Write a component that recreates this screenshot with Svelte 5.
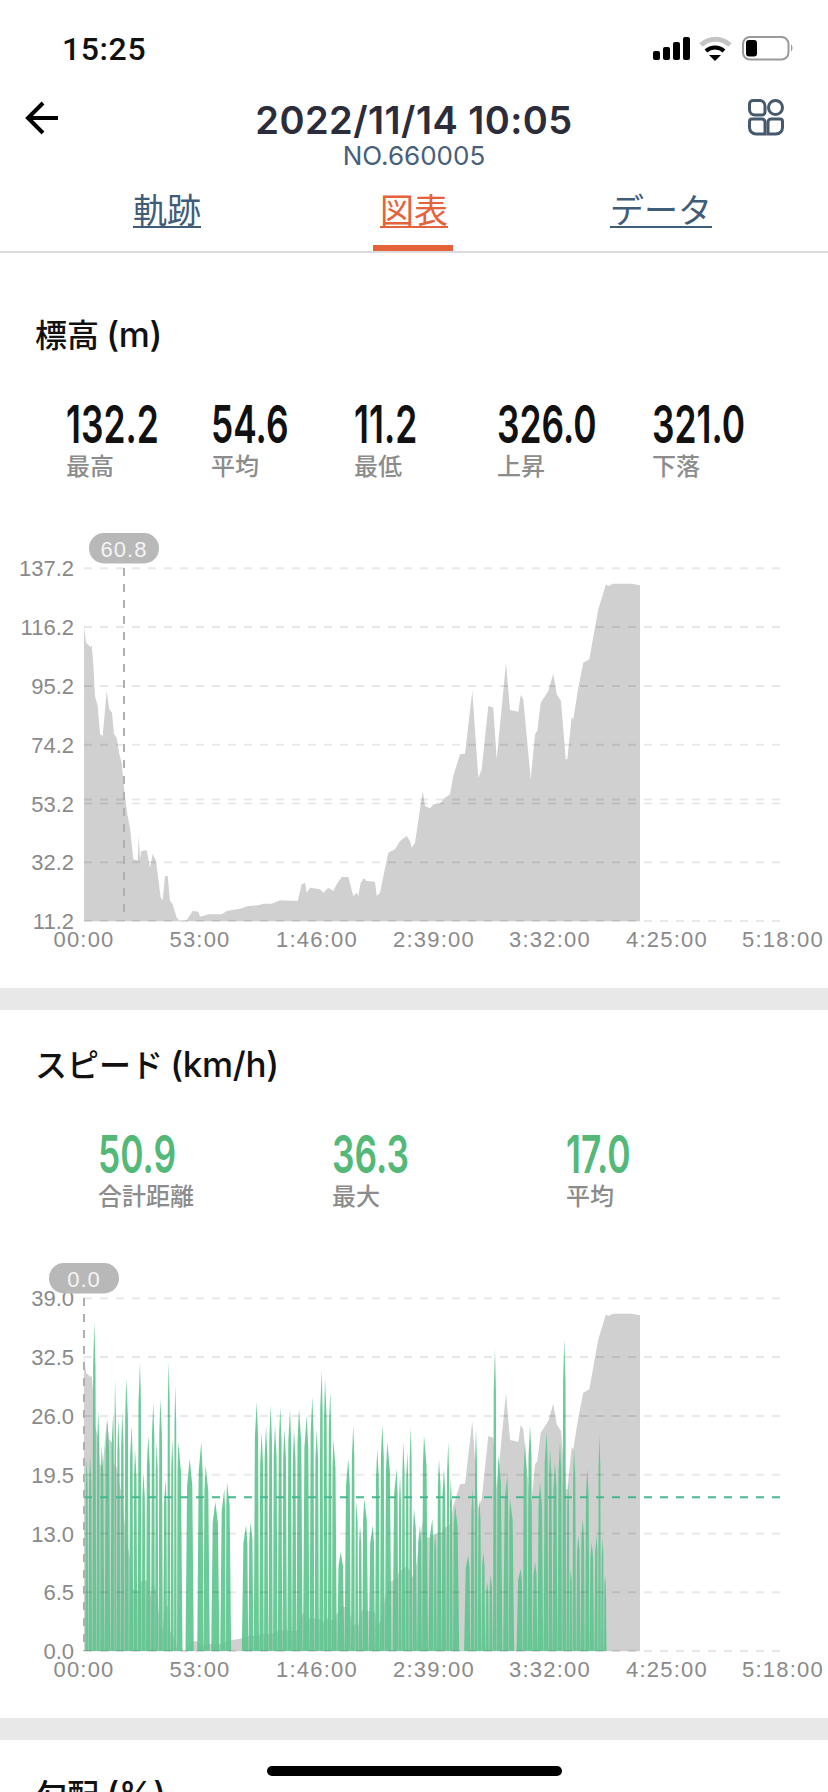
<script>
	// elevation outline, traced in 3x crop coordinates (divided by 3 when drawn)
	const elevation = [
		[252, 1201], [252, 315], [258, 365], [272, 378], [275, 372], [280, 430], [285, 525], [293, 555], [300, 640], [308, 645],
		[320, 510], [328, 565], [336, 575], [342, 640], [350, 650], [358, 700], [365, 725], [372, 800], [382, 880], [390, 920],
		[400, 1015], [413, 1018], [416, 945], [420, 1015], [424, 990], [440, 988], [450, 1040], [458, 998], [468, 1020], [482, 1130],
		[488, 1138], [495, 1065], [503, 1065], [510, 1140], [518, 1150], [530, 1190], [540, 1200], [560, 1198], [578, 1170], [595, 1172],
		[600, 1187], [625, 1180], [665, 1180], [680, 1170], [720, 1163], [745, 1155], [775, 1153], [790, 1148], [815, 1148], [840, 1138],
		[893, 1140], [905, 1090], [915, 1085], [920, 1115], [930, 1100], [960, 1105], [970, 1115], [985, 1100], [1000, 1110], [1010, 1090],
		[1025, 1068], [1045, 1068], [1060, 1125], [1070, 1115], [1075, 1125], [1082, 1085], [1092, 1072], [1100, 1080], [1125, 1082], [1130, 1125],
		[1140, 1115], [1165, 995], [1185, 985], [1200, 960], [1220, 945], [1230, 960], [1235, 980], [1245, 965], [1268, 810], [1275, 855],
		[1290, 862], [1300, 850], [1320, 848], [1335, 830], [1350, 820], [1360, 765], [1380, 700], [1395, 698], [1417, 510], [1435, 770],
		[1445, 745], [1465, 555], [1480, 560], [1490, 715], [1518, 425], [1530, 567], [1555, 572], [1562, 522], [1570, 535], [1592, 775],
		[1605, 640], [1612, 630], [1622, 545], [1645, 510], [1660, 458], [1670, 520], [1683, 540], [1697, 715], [1702, 715], [1715, 588],
		[1720, 595], [1735, 500], [1750, 425], [1768, 415], [1795, 265], [1818, 190], [1825, 195], [1840, 188], [1895, 188], [1920, 193],
		[1920, 1201]
	];
	const elevationPoints = elevation.map(([x, y]) => `${(x / 3).toFixed(1)},${(y / 3).toFixed(1)}`).join(' ');

	// speed peaks in the same crop coordinates, [x, top]
	const peaks = [
		[260, 650], [270, 640], [283, 240], [295, 505], [305, 610], [322, 530], [340, 510], [345, 410], [355, 530], [367, 510],
		[379, 410], [395, 550], [405, 620], [420, 360], [430, 690], [445, 580], [460, 480], [470, 600], [481, 470], [497, 710],
		[506, 360], [517, 590], [526, 430], [535, 600], [569, 650], [604, 600], [617, 670], [646, 780], [673, 740], [681, 720],
		[738, 850], [752, 840], [770, 480], [785, 570], [798, 550], [812, 490], [825, 550], [841, 495], [853, 560], [870, 500],
		[882, 560], [897, 500], [920, 520], [937, 465], [950, 560], [965, 385], [975, 410], [991, 450], [1000, 590], [1022, 930],
		[1045, 650], [1060, 550], [1070, 780], [1080, 850], [1093, 770], [1118, 850], [1132, 620], [1147, 550], [1162, 600], [1190, 680],
		[1200, 700], [1210, 600], [1222, 630], [1232, 555], [1242, 800], [1260, 850], [1272, 580], [1297, 830], [1305, 870], [1317, 650],
		[1332, 680], [1345, 600], [1352, 710], [1365, 790], [1405, 940], [1418, 740], [1428, 560], [1438, 770], [1450, 930], [1462, 1020],
		[1472, 1000], [1485, 320], [1495, 640], [1522, 700], [1530, 770], [1562, 980], [1575, 600], [1590, 550], [1605, 960], [1620, 720],
		[1640, 570], [1650, 620], [1665, 660], [1680, 600], [1693, 290], [1705, 720], [1712, 980], [1722, 620], [1735, 880], [1748, 830],
		[1762, 680], [1775, 900], [1790, 880], [1798, 580], [1808, 890], [1815, 1000]
	];

	// each peak tapers from a foot that almost meets its neighbours, leaving hairline gaps
	const speedPath = peaks
		.map(([x, top], i) => {
			const prev = i ? x - peaks[i - 1][0] : 10;
			const next = i < peaks.length - 1 ? peaks[i + 1][0] - x : 10;
			const left = Math.min(prev, 26) / 6 - 0.15;
			const right = Math.min(next, 26) / 6 - 0.15;
			const cx = x / 3;
			const y = top / 3 - 9;
			const shoulder = y + (400 - y) * 0.14;
			return (
				`M${(cx - left).toFixed(1)} 400L${(cx - left * 0.62).toFixed(1)} ${shoulder.toFixed(1)}` +
				`L${cx.toFixed(1)} ${y.toFixed(1)}L${(cx + right * 0.62).toFixed(1)} ${shoulder.toFixed(1)}L${(cx + right).toFixed(1)} 400Z`
			);
		})
		.join('');

	const timeTicks = [
		['00:00', 84],
		['53:00', 200],
		['1:46:00', 317],
		['2:39:00', 434],
		['3:32:00', 550],
		['4:25:00', 667],
		['5:18:00', 783]
	];

	const elevationStats = [
		['132.2', '最高'],
		['54.6', '平均'],
		['11.2', '最低'],
		['326.0', '上昇'],
		['321.0', '下落']
	];
	const speedStats = [
		['50.9', '合計距離'],
		['36.3', '最大'],
		['17.0', '平均']
	];
</script>

{#snippet chart(levels, tip, tipX, avgY, avgClass, speed)}
	<svg class="chart" width="828" height="467" viewBox="0 0 828 467">
		<polygon class="area" points={elevationPoints} />
		{#if speed}
			<path class="speed" d={speedPath} />
		{/if}
		{#each levels as level, i}
			{@const y = 47.3 + i * 58.8}
			<line class="grid" x1="84" x2="780" y1={y} y2={y} />
			<text class="ylabel" x="74" y={y + 8}>{level}</text>
		{/each}
		<line class={avgClass} x1="84" x2="780" y1={avgY} y2={avgY} />
		<line class="cursor" x1={tipX} x2={tipX} y1="47" y2="400" />
		<rect class="tip" x={tipX - 35} y="12" width="70" height="30.5" rx="15" />
		<text class="tiptext" x={tipX} y="35.5">{tip}</text>
		{#each timeTicks as [label, x]}
			<text class="xlabel" {x} y="426">{label}</text>
		{/each}
	</svg>
{/snippet}

<div class="screen">
	<div class="status">
		<span class="time">15:25</span>
		<svg width="142" height="26" viewBox="653 37 142 26">
			<g fill="#000">
				<rect x="653" y="52" width="7" height="9" rx="2" />
				<rect x="663" y="48" width="7" height="13" rx="2" />
				<rect x="673" y="43" width="7" height="18" rx="2" />
				<rect x="683" y="38" width="7" height="23" rx="2" />
			</g>
			<path d="M701 46 A21 21 0 0 1 730 46" fill="none" stroke="#c4c4c4" stroke-width="5" />
			<path d="M706 52 A13 13 0 0 1 724 52" fill="none" stroke="#000" stroke-width="4" />
			<path d="M709 56 L721 56 L715 62 Z" fill="#000" />
			<rect x="743" y="38" width="45.5" height="22.5" rx="7" fill="none" stroke="#9a9a9a" stroke-width="2" />
			<rect x="746" y="41" width="11" height="16.5" rx="3" fill="#000" />
			<path d="M791 45 Q794 49 791 53 Z" fill="#9a9a9a" />
		</svg>
	</div>

	<header class="nav">
		<svg class="back" width="40" height="40" viewBox="0 0 40 40">
			<path d="M35 20 H5 M20 5 L5 20 L20 35" fill="none" stroke="#000" stroke-width="4" />
		</svg>
		<div class="heading">
			<div class="date">2022/11/14 10:05</div>
			<div class="serial">NO.660005</div>
		</div>
		<svg class="apps" width="38" height="38" viewBox="0 0 38 38">
			<g fill="none" stroke="#45586c" stroke-width="3">
				<path d="M6 2.5 H13 A5.5 5.5 0 0 1 18 8 V14 A3 3 0 0 1 15 17 H8 A5.5 5.5 0 0 1 2.5 11.5 V6 A3.5 3.5 0 0 1 6 2.5 Z" />
				<circle cx="28.5" cy="9.5" r="7" />
				<path d="M5 21 H15 A3 3 0 0 1 18 24 V36 H9 A6.5 6.5 0 0 1 2.5 29.5 V23.5 A2.5 2.5 0 0 1 5 21 Z" />
				<path d="M24 21 H33 A2.5 2.5 0 0 1 35.5 23.5 V29.5 A6.5 6.5 0 0 1 29 36 H21 V24 A3 3 0 0 1 24 21 Z" />
			</g>
		</svg>
	</header>

	<nav class="tabs">
		<div class="tab"><span>軌跡</span></div>
		<div class="tab active"><span>図表</span></div>
		<div class="tab"><span>データ</span></div>
	</nav>

	<section class="first">
		<h2>標高 <b>(m)</b></h2>
		<div class="stats five">
			{#each elevationStats as [value, label]}
				<div>
					<div class="value">{value}</div>
					<div class="label">{label}</div>
				</div>
			{/each}
		</div>
		{@render chart(['137.2', '116.2', '95.2', '74.2', '53.2', '32.2', '11.2'], '60.8', 124, 278.5, 'grid', false)}
	</section>

	<section>
		<h2>スピード <b>(km/h)</b></h2>
		<div class="stats three">
			{#each speedStats as [value, label]}
				<div>
					<div class="value green">{value}</div>
					<div class="label">{label}</div>
				</div>
			{/each}
		</div>
		{@render chart(['39.0', '32.5', '26.0', '19.5', '13.0', '6.5', '0.0'], '0.0', 84, 246.3, 'avg', true)}
	</section>

	<section class="last">
		<h2>勾配 <b>(%)</b></h2>
	</section>

	<div class="home"></div>
</div>

<style>
	:global(body) {
		margin: 0;
		background: #fff;
	}

	.screen {
		position: relative;
		display: flex;
		flex-direction: column;
		width: 828px;
		height: 1792px;
		overflow: hidden;
		background: #e8e8e8;
		font-family: Inter, 'Noto Sans CJK JP', sans-serif;
	}

	.status {
		display: flex;
		flex: none;
		justify-content: space-between;
		align-items: center;
		height: 90px;
		padding: 8px 33px 0 62px;
		box-sizing: border-box;
		background: #fff;
	}

	.time {
		font-family: Roboto, sans-serif;
		font-size: 32px;
		font-weight: 500;
		letter-spacing: 0.6px;
		color: #111;
	}

	.nav {
		display: grid;
		flex: none;
		grid-template-columns: 1fr auto 1fr;
		align-items: start;
		height: 78px;
		box-sizing: border-box;
		padding: 8px 43px 0;
		background: #fff;
	}

	.back {
		margin-left: -20px;
	}

	.apps {
		justify-self: end;
	}

	.heading {
		text-align: center;
	}

	.date {
		font-size: 38px;
		font-weight: 600;
		line-height: 44px;
		color: #2c2c3a;
		letter-spacing: 0.45px;
	}

	.serial {
		font-size: 26px;
		line-height: 28px;
		color: #46607a;
	}

	.tabs {
		display: grid;
		flex: none;
		grid-template-columns: repeat(3, 247px);
		justify-content: center;
		height: 85px;
		box-sizing: border-box;
		border-bottom: 2px solid #dcdcdc;
		background: #fff;
	}

	.tab {
		position: relative;
		text-align: center;
		padding-top: 24px;
		font-family: 'Noto Sans CJK JP', sans-serif;
		font-size: 34px;
		line-height: 34px;
		color: #3f5d78;
	}

	.tab span {
		display: inline-block;
		line-height: 34px;
		border-bottom: 2px solid currentColor;
	}

	.tab.active {
		color: #e5633a;
	}

	.tab.active::after {
		content: '';
		position: absolute;
		left: 82px;
		bottom: 0;
		width: 80px;
		height: 6px;
		background: #e5633a;
	}

	section {
		flex: none;
		background: #fff;
		padding-top: 34px;
		margin-bottom: 22px;
	}

	section.first {
		padding-top: 61px;
	}

	section.last {
		flex: 1;
		margin-bottom: 0;
		padding-top: 34px;
	}

	h2 {
		margin: 0;
		padding-left: 35px;
		font-family: 'Noto Sans CJK JP', sans-serif;
		font-size: 32px;
		font-weight: 500;
		line-height: 38px;
		color: #111;
	}

	h2 b {
		font-family: Inter, sans-serif;
		font-size: 35px;
		font-weight: 500;
		letter-spacing: -0.3px;
	}

	.stats {
		display: grid;
		height: 168px;
		padding-top: 49px;
		box-sizing: border-box;
	}

	.stats.five {
		padding-left: 66px;
		grid-template-columns: 145px 143px 143px 155px 1fr;
	}

	.stats.three {
		padding-left: 98px;
		grid-template-columns: 234px 234px 1fr;
	}

	.value {
		font-family: Inter, sans-serif;
		font-size: 52px;
		font-weight: 600;
		line-height: 46px;
		color: #111;
		transform: scaleX(0.68);
		transform-origin: left;
	}

	.value.green {
		color: #53b878;
	}

	.label {
		margin-top: 3px;
		font-family: 'Noto Sans CJK JP', sans-serif;
		font-size: 24px;
		font-weight: 500;
		line-height: 28px;
		color: #8c8c8c;
	}

	.chart {
		display: block;
	}

	.area {
		fill: #d0d0d0;
	}

	.speed {
		fill: #5cc48e;
		fill-opacity: 0.9;
	}

	.grid {
		stroke: #000;
		stroke-opacity: 0.09;
		stroke-width: 2;
		stroke-dasharray: 8 8;
	}

	.avg {
		stroke: #45b890;
		stroke-width: 2;
		stroke-dasharray: 8 8;
	}

	.cursor {
		stroke: #b0b0b0;
		stroke-width: 2;
		stroke-dasharray: 8 8;
	}

	.tip {
		fill: #b8b8b8;
	}

	.tiptext,
	.ylabel,
	.xlabel {
		font-family: 'Liberation Sans', sans-serif;
		font-size: 22px;
	}

	.tiptext {
		fill: #f4f4f4;
		text-anchor: middle;
		letter-spacing: 1px;
	}

	.ylabel {
		fill: #8a8a8a;
		text-anchor: end;
	}

	.xlabel {
		fill: #8a8a8a;
		text-anchor: middle;
		letter-spacing: 1.2px;
	}

	.home {
		position: absolute;
		left: 267px;
		top: 1766px;
		width: 295px;
		height: 10px;
		border-radius: 5px;
		background: #000;
	}
</style>
